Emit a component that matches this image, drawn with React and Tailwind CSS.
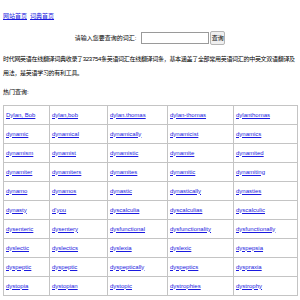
import React from "react";

const rows = [
  ["Dylan, Bob", "dylan,bob", "dylan.thomas", "dylan-thomas", "dylanthomas"],
  ["dynamic", "dynamical", "dynamically", "dynamicist", "dynamics"],
  ["dynamism", "dynamist", "dynamistic", "dynamite", "dynamited"],
  ["dynamiter", "dynamiters", "dynamites", "dynamitic", "dynamiting"],
  ["dynamo", "dynamos", "dynastic", "dynastically", "dynasties"],
  ["dynasty", "d'you", "dyscalculia", "dyscalculias", "dyscalculic"],
  ["dysenteric", "dysentery", "dysfunctional", "dysfunctionality", "dysfunctionally"],
  ["dyslectic", "dyslectics", "dyslexia", "dyslexic", "dyspepsia"],
  ["dyspeptic", "dyspeptic", "dyspeptically", "dyspeptics", "dyspraxia"],
  ["dystopia", "dystopian", "dystopic", "dystrophies", "dystrophy"],
];

const widths = ["w-[46px]", "w-[58px]", "w-[60px]", "w-[66px]", "w-[64px]"];

export default function App() {
  return (
    <div
      className="w-[300px] h-[300px] overflow-hidden px-[3px] bg-white text-[6px] text-black"
      style={{ fontFamily: '"Liberation Sans", "Noto Sans CJK SC", sans-serif' }}
    >
      {/* top links */}
      <div className="pt-[12px] h-[31px] leading-[8px] flex gap-[3px]">
        <a className="text-[#1a1ae0] underline">网站首页</a>
        <a className="text-[#1a1ae0] underline">词典首页</a>
      </div>

      {/* search */}
      <div className="h-[14px] flex items-center justify-center">
        <span className="mr-[5px]">请输入您要查询的词汇:</span>
        <div className="w-[68px] h-[12px] border border-[#9a9a9a] bg-white" />
        <div className="ml-[1px] w-[15px] h-[14px] border border-[#b5b5b5] rounded-[2px] bg-[#efefef] flex items-center justify-center">
          查询
        </div>
      </div>

      {/* description */}
      <p className="mt-[7px] leading-[14px] tracking-[-0.3px] w-[297px]">
        时代网英语在线翻译词典收录了323754条英语词汇在线翻译词条，基本涵盖了全部常用英语词汇的中英文双语翻译及用法，是英语学习的有利工具。
      </p>

      <p className="mt-[5px] leading-[14px]">热门查询:</p>

      <table className="mt-[6px] w-[294px] border-collapse table-fixed">
        <tbody>
          {rows.map((r, i) => (
            <tr key={i}>
              {r.map((w, j) => (
                <td
                  key={j}
                  className={`${widths[j]} h-[19px] border border-[#c4c4c4] px-[2px] whitespace-nowrap overflow-hidden`}
                >
                  <a className="text-[#1a1ae0] underline">{w}</a>
                </td>
              ))}
            </tr>
          ))}
        </tbody>
      </table>
    </div>
  );
}
